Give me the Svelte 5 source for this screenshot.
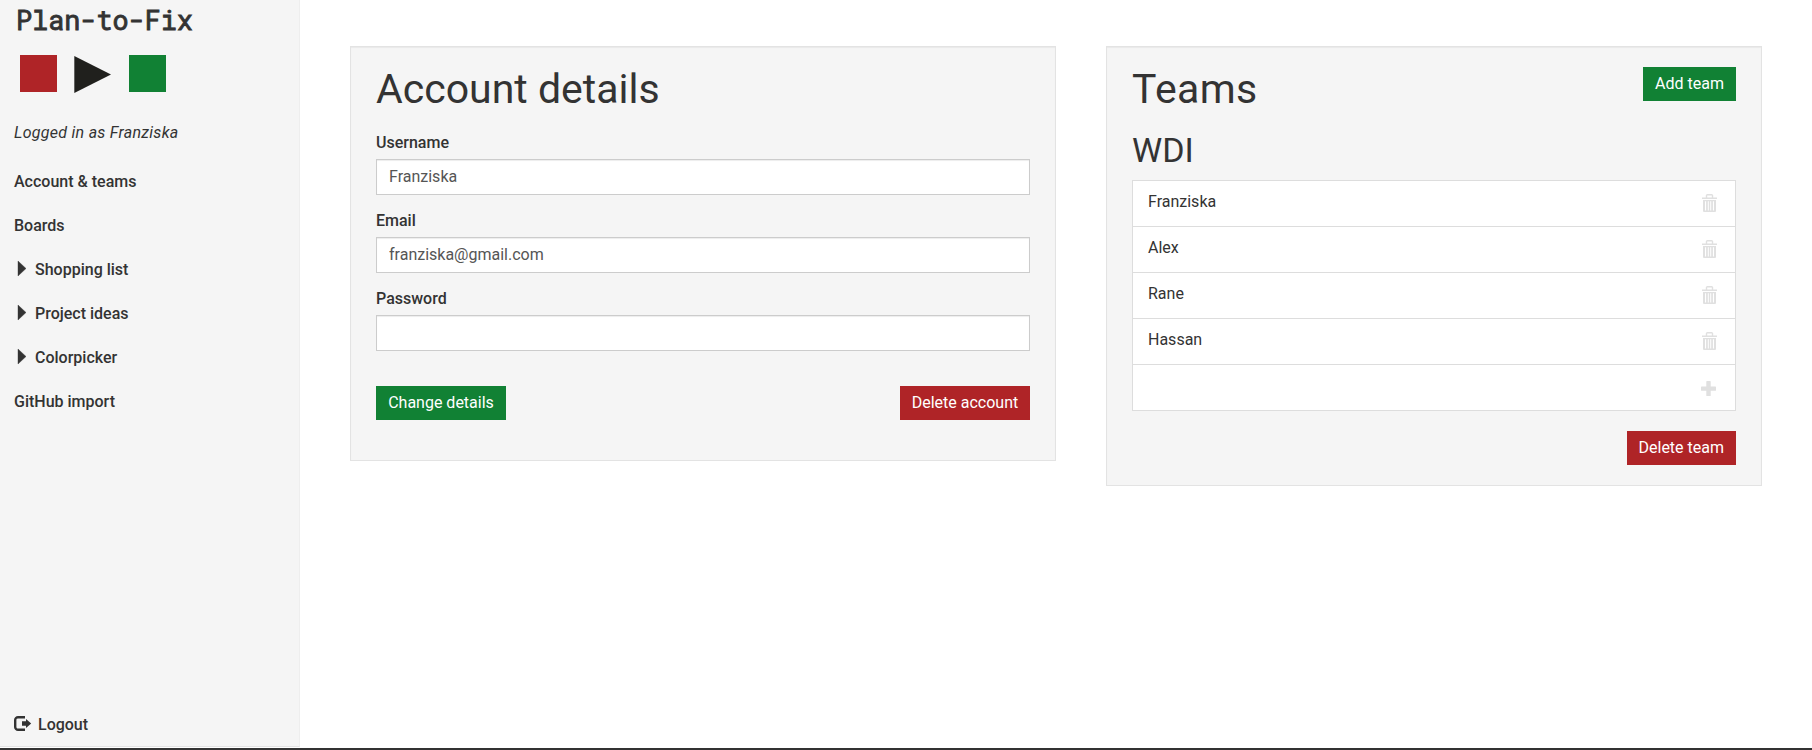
<script>
  const boards = ['Shopping list', 'Project ideas', 'Colorpicker'];
  const members = ['Franziska', 'Alex', 'Rane', 'Hassan'];
  const fields = [
    { id: 'username', label: 'Username', type: 'text', value: 'Franziska' },
    { id: 'email', label: 'Email', type: 'email', value: 'franziska@gmail.com' },
    { id: 'password', label: 'Password', type: 'password', value: '' }
  ];
</script>

<div class="page">
  <aside class="sidebar">
    <div class="brand">Plan-to-Fix</div>
    <svg class="logo" width="146" height="38" viewBox="0 0 146 38" aria-hidden="true">
      <rect x="0" y="0" width="37" height="37" fill="#af2427" />
      <path d="M54.3 1v37l36.7-18.5z" fill="#20201d" />
      <rect x="109" y="0" width="37" height="37" fill="#118134" />
    </svg>
    <p class="user">Logged in as Franziska</p>
    <nav>
      <a href="#account">Account &amp; teams</a>
      <a href="#boards">Boards</a>
      {#each boards as board}
        <a href="#board">
          <svg class="caret" width="8" height="15" viewBox="0 0 8 15" aria-hidden="true"><path d="M0 0v15l8-7.5z" fill="#333" stroke="#333" stroke-width=".4" /></svg>
          {board}
        </a>
      {/each}
      <a href="#github">GitHub import</a>
    </nav>
    <a class="logout" href="#logout">
      <svg width="17" height="15" viewBox="0 0 17 15" aria-hidden="true">
        <path d="M11 1.2H4A2.8 2.8 0 0 0 1.2 4v7A2.8 2.8 0 0 0 4 13.8h7" fill="none" stroke="#333" stroke-width="2.4" />
        <path d="M8 5.3h4V2.9l5.2 4.6-5.2 4.6V9.7H8z" fill="#333" />
      </svg>
      Logout
    </a>
  </aside>

  <main>
    <section class="well account">
      <h1>Account details</h1>
      {#each fields as field}
        <div class="field">
          <label for={field.id}>{field.label}</label>
          <input id={field.id} type={field.type} value={field.value} />
        </div>
      {/each}
      <div class="actions">
        <button class="green">Change details</button>
        <button class="red">Delete account</button>
      </div>
    </section>

    <section class="well teams">
      <header>
        <h1>Teams</h1>
        <button class="green">Add team</button>
      </header>
      <h2>WDI</h2>
      <ul>
        {#each members as member}
          <li>
            <span>{member}</span>
            <svg class="trash" width="15" height="18" viewBox="0 0 15 18" aria-hidden="true">
              <path d="M4.5 3.5V1.6a.9.9 0 0 1 .9-.9h4.2a.9.9 0 0 1 .9.9v1.9M0 4.2h15" fill="none" stroke="#e0e0e0" stroke-width="1.4" />
              <path fill-rule="evenodd" d="M1 6h13v11a1 1 0 0 1-1 1H2a1 1 0 0 1-1-1zM3 7.3v9.2h1.1V7.3zM5.8 7.3v9.2h1V7.3zM8.2 7.3v9.2h1V7.3zM10.9 7.3v9.2H12V7.3z" fill="#e0e0e0" />
            </svg>
          </li>
        {/each}
        <li>
          <span></span>
          <svg class="plus" width="15" height="15" viewBox="0 0 15 15" aria-hidden="true">
            <path d="M5.9 0h3.2a.6.6 0 0 1 .6.6v4.9h4.7a.6.6 0 0 1 .6.6v3.1a.6.6 0 0 1-.6.6H9.7v4.6a.6.6 0 0 1-.6.6H5.9a.6.6 0 0 1-.6-.6V9.8H.6a.6.6 0 0 1-.6-.6V6.1a.6.6 0 0 1 .6-.6h4.7V.6a.6.6 0 0 1 .6-.6z" fill="#e0e0e0" />
          </svg>
        </li>
      </ul>
      <div class="team-actions"><button class="red">Delete team</button></div>
    </section>
  </main>
</div>

<style>
  :global(body) { margin: 0; background: #fff; }
  .page, .page * { box-sizing: border-box; }
  .page {
    display: flex;
    height: 750px;
    border-bottom: 2px solid #333;
    padding-bottom: 1px;
    font: 16px/22px Roboto, sans-serif;
    color: #333;
    overflow: hidden;
  }
  .sidebar {
    display: flex;
    flex-direction: column;
    width: 300px;
    padding: 2px 14px 10px;
    background: #f5f5f5;
    border-right: 1px solid #eee;
    border-bottom: 1px solid #e3e3e3;
  }
  .brand {
    padding-left: 2px;
    font: 26.8px/35px "Roboto Mono", "DejaVu Sans Mono", monospace;
    -webkit-text-stroke: 0.9px #333;
  }
  .logo { display: block; margin: 18px 0 0 6px; }
  .user { margin: 29px 0 27px; font-style: italic; letter-spacing: 0.28px; }
  nav { display: flex; flex-direction: column; gap: 22px; }
  a { display: flex; align-items: center; color: #333; font-weight: 500; text-decoration: none; }
  .caret { margin: -4px 9px 0 4px; overflow: visible; }
  .logout { margin-top: auto; gap: 7px; }
  .logout svg { margin-top: -3px; overflow: visible; }
  main {
    flex: 1;
    display: grid;
    grid-template-columns: 706px 656px;
    column-gap: 50px;
    align-items: start;
    padding: 46px 0 0 50px;
  }
  .well {
    background: #f5f5f5;
    border: 1px solid #e3e3e3;
    padding: 20px 25px;
    box-shadow: inset 0 1px 1px rgba(0, 0, 0, 0.05);
  }
  .account { height: 415px; }
  h1, h2 { margin: 0; font-weight: 400; }
  h1 { font-size: 41px; line-height: 45px; }
  h2 { font-size: 34px; line-height: 37px; margin: 20px 0 11px; }
  .account h1 { margin-bottom: 20px; }
  .teams h1 { letter-spacing: 0.4px; }
  .field { margin-bottom: 15px; }
  label { display: block; margin-bottom: 5px; font-weight: 500; }
  input {
    display: block;
    width: 100%;
    height: 36px;
    padding: 5px 12px 7px;
    border: 1px solid #ccc;
    border-radius: 0;
    background: #fff;
    color: #555;
    font: inherit;
    box-shadow: inset 0 1px 1px rgba(0, 0, 0, 0.075);
  }
  .actions { display: flex; justify-content: space-between; margin-top: 35px; }
  button {
    height: 34px;
    padding: 0 12px;
    border: 0;
    color: #fff;
    font: inherit;
    white-space: nowrap;
  }
  .actions button { width: 130px; padding: 0; }
  .green { background: #118134; }
  .red { background: #af2427; }
  header { display: flex; justify-content: space-between; align-items: flex-start; }
  ul { list-style: none; margin: 0; padding: 0; border: 1px solid #ddd; background: #fff; }
  li { display: flex; justify-content: space-between; height: 46px; padding: 10px 18px 0 15px; border-bottom: 1px solid #ddd; }
  li:last-child { height: 45px; border-bottom: 0; }
  .trash { margin-top: 3px; }
  .plus { margin: 6px 1px 0 0; }
  .team-actions { display: flex; justify-content: flex-end; margin-top: 20px; }
</style>
